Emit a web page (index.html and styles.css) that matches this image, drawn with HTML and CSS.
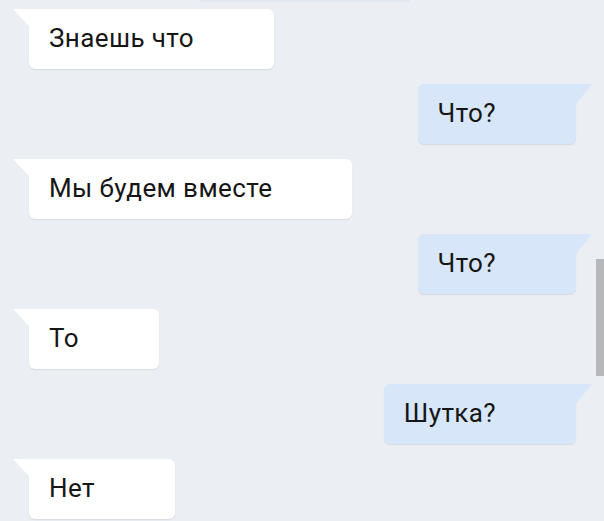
FILE: index.html
```html
<!DOCTYPE html>
<html lang="ru">
<head>
    <meta charset="UTF-8">
    <meta name="viewport" content="width=device-width, initial-scale=1.0">
    <title>Чат</title>
    <link rel="stylesheet" href="styles.css">
</head>
<body>
<div class="chat">
    <div class="prev-edge"></div>
    <div class="msg in"><div class="bubble">Знаешь что</div></div>
    <div class="msg out"><div class="bubble">Что?</div></div>
    <div class="msg in"><div class="bubble">Мы будем вместе</div></div>
    <div class="msg out"><div class="bubble">Что?</div></div>
    <div class="msg in"><div class="bubble">То</div></div>
    <div class="msg out"><div class="bubble">Шутка?</div></div>
    <div class="msg in"><div class="bubble">Нет</div></div>
</div>
<div class="scrollbar"></div>
</body>
</html>
```

FILE: styles.css
```css
html, body {
    margin: 0;
    height: 100%;
    overflow: hidden;
}
body {
    background-color: #ebeef2;
    font-family: Roboto, "Noto Sans", "Liberation Sans", sans-serif;
    color: #161616;
}
.chat {
    display: flex;
    flex-direction: column;
    gap: 15px;
    padding-top: 0;
}
/* край предыдущего сообщения сверху */
.prev-edge {
    height: 2px;
    width: 210px;
    margin-left: 200px;
    margin-bottom: -8px;
    background-color: #e2e8f0;
}
.msg {
    display: flex;
}
.msg.in {
    padding-left: 29px;
}
.msg.out {
    justify-content: flex-end;
    padding-right: 28px;
}
.bubble {
    position: relative;
    height: 60px;
    line-height: 59px;
    font-size: 26px;
    letter-spacing: 0.4px;
    padding: 0 80px 0 20px;
    border-radius: 6px;
    background-color: #ffffff;
    box-shadow: 0 1px 1px rgba(60, 80, 110, 0.12);
    white-space: nowrap;
}
.msg.in .bubble {
    border-top-left-radius: 0;
}
.msg.out .bubble {
    background-color: #d7e6f8;
    border-top-right-radius: 0;
}
/* хвостик пузыря */
.bubble::before {
    content: "";
    position: absolute;
    top: 0;
    width: 16px;
    background-color: inherit;
}
.msg.in .bubble::before {
    left: -16px;
    height: 17px;
    clip-path: polygon(0 0, 100% 0, 100% 100%);
}
.msg.out .bubble::before {
    right: -16px;
    height: 20px;
    clip-path: polygon(0 0, 100% 0, 0 100%);
}
.scrollbar {
    position: fixed;
    right: 0;
    top: 259px;
    width: 8px;
    height: 117px;
    background-color: #b6b8ba;
}
```
